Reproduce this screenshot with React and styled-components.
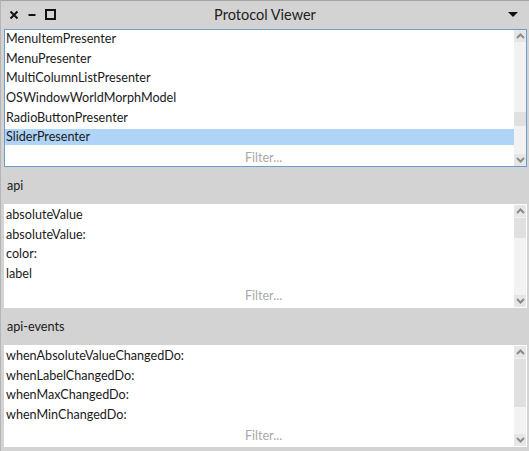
import React from 'react';
import styled, { createGlobalStyle } from 'styled-components';

const GlobalStyle = createGlobalStyle`
  html, body {
    margin: 0;
    padding: 0;
    background: #d3d3d3;
  }
  body {
    font-family: Lato, "Noto Sans", sans-serif;
    font-size: 12.6px;
    color: #1a1a1a;
  }
`;

const Window = styled.div`
  width: 529px;
  height: 451px;
  background: #d3d3d3;
  border-top: 1px solid #a3a3a3;
  border-left: 1px solid #b5b5b5;
  box-sizing: border-box;
  display: flex;
  flex-direction: column;
  overflow: hidden;
`;

const TitleBar = styled.div`
  height: 28px;
  display: flex;
  align-items: center;
  padding: 0 8px;
`;

const Side = styled.div`
  width: 60px;
  display: flex;
  align-items: center;
  justify-content: ${p => (p.$end ? 'flex-end' : 'flex-start')};
  gap: 8px;
`;

const Title = styled.div`
  flex: 1;
  text-align: center;
  font-size: 14.5px;
  color: #222;
`;

const MenuArrow = styled.div`
  width: 0;
  height: 0;
  border-left: 5px solid transparent;
  border-right: 5px solid transparent;
  border-top: 5px solid #111;
  margin-right: 3px;
`;

const Body = styled.div`
  flex: 1;
  display: flex;
  flex-direction: column;
  padding: 1px 2px 4px 3px;
`;

const ListBox = styled.div`
  height: ${p => p.$h}px;
  background: #fff;
  border: 1px solid ${p => (p.$focused ? '#6c9bd2' : '#fff')};
  box-sizing: border-box;
  display: flex;
`;

const ListContent = styled.div`
  flex: 1;
  display: flex;
  flex-direction: column;
  padding-top: ${p => p.$top}px;
  min-width: 0;
`;

const Row = styled.div`
  height: 16px;
  line-height: 16px;
  margin-bottom: 3.7px;
  padding-left: 1px;
  background: ${p => (p.$selected ? '#b0d3f8' : 'transparent')};
  white-space: nowrap;
`;

const Filter = styled.div`
  margin-top: auto;
  height: 20px;
  line-height: 18px;
  text-align: center;
  color: #a9a9a9;
  padding-left: 8px;
`;

const Scrollbar = styled.div`
  width: 12px;
  display: flex;
  flex-direction: column;
  background: #f2f2f2;
`;

const ArrowButton = styled.div`
  height: 12px;
  display: flex;
  align-items: center;
  justify-content: center;
  background: #e6e6e6;
`;

const Track = styled.div`
  flex: 1;
  display: flex;
  flex-direction: column;
  padding-top: ${p => p.$offset}px;
`;

const Thumb = styled.div`
  height: ${p => p.$size}px;
  background: #e0e0e0;
`;

const SectionLabel = styled.div`
  height: 37px;
  line-height: 37px;
  padding-left: 3px;
`;

const Chevron = ({ up }) => (
  <svg width="9" height="6" viewBox="0 0 9 6">
    <path
      d={up ? 'M1 5 L4.5 1.5 L8 5' : 'M1 1 L4.5 4.5 L8 1'}
      fill="none"
      stroke="#8a8a8a"
      strokeWidth="2"
    />
  </svg>
);

const CloseIcon = () => (
  <svg width="10" height="10" viewBox="0 0 10 10">
    <path d="M1.5 1.5 L8.5 8.5 M8.5 1.5 L1.5 8.5" stroke="#111" strokeWidth="2" />
  </svg>
);

const MinIcon = () => (
  <svg width="10" height="10" viewBox="0 0 10 10">
    <path d="M1.5 5 L8.5 5" stroke="#111" strokeWidth="2" />
  </svg>
);

const MaxIcon = () => (
  <svg width="11" height="11" viewBox="0 0 11 11">
    <rect x="1" y="1" width="9" height="9" fill="none" stroke="#111" strokeWidth="2" />
  </svg>
);

const List = ({ items, selected, height, top, focused, thumbOffset, thumbSize }) => (
  <ListBox $h={height} $focused={focused}>
    <ListContent $top={top}>
      {items.map(item => (
        <Row key={item} $selected={item === selected}>{item}</Row>
      ))}
      <Filter>Filter...</Filter>
    </ListContent>
    <Scrollbar>
      <ArrowButton><Chevron up /></ArrowButton>
      <Track $offset={thumbOffset}>
        <Thumb $size={thumbSize} />
      </Track>
      <ArrowButton><Chevron /></ArrowButton>
    </Scrollbar>
  </ListBox>
);

const classes = [
  'MenuItemPresenter',
  'MenuPresenter',
  'MultiColumnListPresenter',
  'OSWindowWorldMorphModel',
  'RadioButtonPresenter',
  'SliderPresenter',
];

const api = ['absoluteValue', 'absoluteValue:', 'color:', 'label'];

const events = [
  'whenAbsoluteValueChangedDo:',
  'whenLabelChangedDo:',
  'whenMaxChangedDo:',
  'whenMinChangedDo:',
];

export default function App() {
  return (
    <>
      <GlobalStyle />
      <Window>
        <TitleBar>
          <Side>
            <CloseIcon />
            <MinIcon />
            <MaxIcon />
          </Side>
          <Title>Protocol Viewer</Title>
          <Side $end>
            <MenuArrow />
          </Side>
        </TitleBar>
        <Body>
          <List
            items={classes}
            selected="SliderPresenter"
            height={138}
            top={1}
            focused
            thumbOffset={70}
            thumbSize={14}
          />
          <SectionLabel>api</SectionLabel>
          <List items={api} height={104} top={2} thumbOffset={1} thumbSize={20} />
          <SectionLabel>api-events</SectionLabel>
          <List items={events} height={102} top={2} thumbOffset={1} thumbSize={48} />
        </Body>
      </Window>
    </>
  );
}
